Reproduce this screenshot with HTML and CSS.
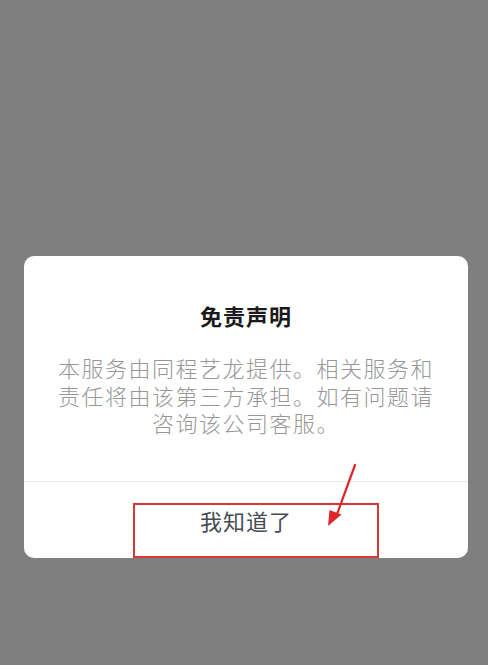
FILE: index.html
```html
<!DOCTYPE html>
<html lang="zh">
<head>
<meta charset="utf-8">
<link rel="stylesheet" href="styles.css">
</head>
<body>
<div class="page">
  <div class="dialog">
    <div class="content">
      <div class="title">免责声明</div>
      <div class="text">本服务由同程艺龙提供。相关服务和责任将由该第三方承担。如有问题请咨询该公司客服。</div>
    </div>
    <div class="actions">
      <button class="ok">我知道了</button>
    </div>
    <div class="mark-box"></div>
    <svg class="mark-arrow" width="60" height="80" viewBox="0 0 60 80">
      <path d="M47 6 L28 58" stroke="#e0252a" stroke-width="2.2" stroke-linecap="round" fill="none"/>
      <path d="M20 67 L21.5 51 L33.5 55.5 Z" fill="#e0252a"/>
    </svg>
  </div>
</div>
</body>
</html>
```
FILE: styles.css
```css
html, body {
  margin: 0;
  padding: 0;
  height: 100%;
}
body {
  background: #7f7f7f;
  font-family: "Noto Sans CJK SC", "Noto Sans", sans-serif;
}
.page {
  padding: 256px 20px 0 24px;
}
.dialog {
  position: relative;
  width: 444px;
  background: #ffffff;
  border-radius: 10px;
  display: flex;
  flex-direction: column;
}
.content {
  padding: 44px 0 44px;
  display: flex;
  flex-direction: column;
  align-items: center;
  gap: 24px;
  border-bottom: 1px solid #e6e6e6;
}
.title {
  font-size: 22px;
  line-height: 30px;
  font-weight: 700;
  color: #1a1a1a;
  letter-spacing: 1px;
}
.text {
  width: 378px;
  font-size: 22px;
  line-height: 27.5px;
  letter-spacing: 1.5px;
  font-weight: 300;
  color: #979797;
  text-align: center;
}
.actions {
  height: 76px;
  display: flex;
  align-items: center;
  justify-content: center;
}
.ok {
  border: none;
  background: none;
  padding: 0;
  font-family: inherit;
  font-size: 22px;
  letter-spacing: 1px;
  color: #464b55;
  font-weight: 400;
}
.mark-box {
  position: absolute;
  left: 109px;
  top: 247px;
  width: 242px;
  height: 51px;
  border: 2px solid #d9383a;
}
.mark-arrow {
  position: absolute;
  left: 284px;
  top: 203px;
}
```
